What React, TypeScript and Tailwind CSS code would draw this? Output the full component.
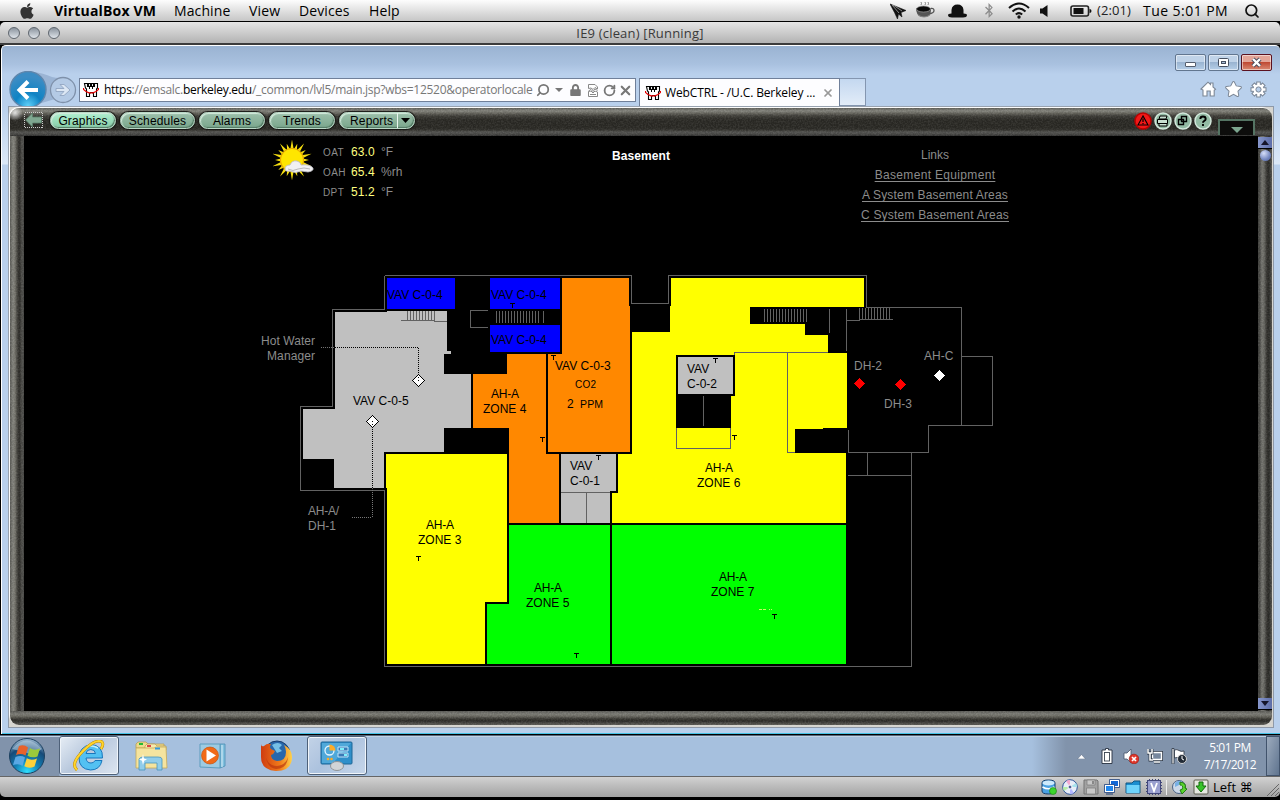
import React from "react";
import { FaApple, FaBluetoothB, FaLock, FaStar } from "react-icons/fa";
import { Search, RotateCw, X } from "lucide-react";

const range = (from: number, to: number, step: number) => {
  const out: number[] = [];
  for (let v = from; v <= to; v += step) out.push(v);
  return out;
};

/* ---------- host menu bar ---------- */

function MacMenuBar() {
  return (
    <header className="flex h-[22px] shrink-0 items-center border-b border-black bg-linear-to-b from-[#fdfdfd] to-[#c6c6c6] pl-[18px] font-['Open_Sans','Noto_Sans',sans-serif] text-[14px] leading-none text-black">
      <FaApple className="h-[18px] w-[18px] text-[#333]" />
      <nav className="flex pl-[18px]">
        <span className="w-[120px] font-bold tracking-[0.18px] whitespace-nowrap">VirtualBox VM</span>
        <span className="w-[75px] tracking-[0.1px]">Machine</span>
        <span className="w-[50px] tracking-[0.2px]">View</span>
        <span className="w-[70px] tracking-[0.1px]">Devices</span>
        <span className="tracking-[0.1px]">Help</span>
      </nav>
      <div className="ml-auto flex items-center pr-[20px]">
        <svg className="mr-[10px]" width="16" height="16" viewBox="0 0 16 16">
          <path d="M0 1 16 7.500 11 9.500 12 14 8.500 11 7.500 16 4.500 9.500Z" fill="#111" stroke="#111" strokeWidth=".6" />
          <path d="M2 2 9 10M3 2l9 6" stroke="#bbb" strokeWidth=".7" fill="none" />
        </svg>
        <svg className="mr-[13px]" width="19" height="17" viewBox="0 0 19 17">
          <path d="M5 3q1-1.500 0-3M9 3q1-1.500 0-3M12 3q1-1.500 0-3" stroke="#777" fill="none" strokeWidth=".9" />
          <path d="M0 6h15v2q0 6-5 7H5Q0 13 0 6Z" fill="#555" />
          <ellipse cx="7.500" cy="7" rx="7" ry="3" fill="#0a0a0a" stroke="#999" strokeWidth=".7" />
          <path d="M15 6.500q3-.5 3 2t-5 3.500" stroke="#555" strokeWidth="1.300" fill="none" />
          <path d="M2 13q6 4 12 0" stroke="#888" fill="none" />
        </svg>
        <svg className="mr-[17px]" width="19" height="14" viewBox="0 0 19 14">
          <path d="M3.500 9.500V6Q4 .500 9.500.500T15.500 6v3.500q3.500.2 3.500 1.500 0 2.500-4 2.500H4Q0 13.500 0 11q0-1.300 3.500-1.500Z" fill="#111" />
        </svg>
        <FaBluetoothB className="mr-[14px] h-[15px] w-[10px] text-[#8d8d8d]" />
        <svg className="mr-[10px]" width="22" height="17" viewBox="0 0 22 17">
          <g fill="none" stroke="#111" strokeWidth="2">
            <path d="M1 6q10-9 20 0" />
            <path d="M4.500 9.500q6.500-6 13 0" />
            <path d="M7.800 12.500q3.200-2.800 6.400 0" />
          </g>
          <circle cx="11" cy="15" r="1.700" fill="#111" />
        </svg>
        <svg className="mr-[22px]" width="8" height="12" viewBox="0 0 8 12">
          <path d="M0 3.500h2.500L7.500 0v12L2.500 8.500H0Z" fill="#111" />
        </svg>
        <svg className="mr-[5px]" width="22" height="12" viewBox="0 0 22 12">
          <rect x="1" y="1" width="17.500" height="10" rx="2" fill="none" stroke="#222" strokeWidth="1.600" />
          <rect x="3.500" y="3" width="10" height="6" fill="#111" />
          <path d="M19.500 4q2 0 2 2t-2 2Z" fill="#111" />
        </svg>
        <span className="w-[46px] text-[13px] tracking-[0.1px] text-[#222]">(2:01)</span>
        <span className="w-[101px] tracking-[0.45px] whitespace-nowrap">Tue 5:01 PM</span>
        <Search className="h-4 w-4 text-[#111]" strokeWidth={2.6} />
      </div>
    </header>
  );
}

function VmTitleBar() {
  return (
    <div className="flex h-[23px] shrink-0 items-center rounded-t-[5px] border-b-2 border-[#3c3c3c] bg-linear-to-b from-[#e6e6e6] to-[#b3b3b3]">
      <div className="flex w-[60px] gap-2 pl-2">
        {[0, 1, 2].map((i) => (
          <span key={i} className="h-3 w-3 rounded-full border border-[#5f666e] bg-linear-to-b from-[#8b949e] to-[#dfe4ea]" />
        ))}
      </div>
      <div className="flex-1 pt-[2px] pr-[60px] text-center font-['Open_Sans','Noto_Sans',sans-serif] text-[13px] leading-none tracking-[0.18px] text-[#3a3a3a]">
        IE9 (clean) [Running]
      </div>
    </div>
  );
}

/* ---------- browser chrome ---------- */

function WebCtrlIcon() {
  return (
    <svg className="shrink-0" width="16" height="16" viewBox="0 0 16 16">
      <path
        d="M1.500 1.500h3v3h1v-3h2v3h1v-3h2v3h1v-3h3V6l-1 1v7.500h-3v-3l-1-1h-2l-1 1v3h-3V7l-1-1Z"
        fill="#fff"
        stroke="#000"
        strokeWidth="1.100"
      />
      <path d="M6.500 4v3M9.500 4v3" stroke="#000" />
      <path d="M.5 6v1.500L3 9.500l3 1.300h4l3-1.300 2.500-2V6" stroke="#e80000" strokeWidth="1.200" fill="none" />
    </svg>
  );
}

function CaptionButtons() {
  const base = "flex h-[17px] w-[31px] items-center justify-center rounded-[2px] border shadow-[inset_0_0_0_1px_rgba(255,255,255,0.5)]";
  return (
    <div className="flex gap-[2px]">
      <span className={`${base} border-[#62768f] bg-[linear-gradient(#c0d3e8_45%,#9ab4d1_50%,#b6cfe8)]`}>
        <span className="mt-1 h-[5px] w-[11px] rounded-[1px] border border-[#555e6d] bg-white" />
      </span>
      <span className={`${base} border-[#62768f] bg-[linear-gradient(#c0d3e8_45%,#9ab4d1_50%,#b6cfe8)]`}>
        <svg width="11" height="9" viewBox="0 0 11 9">
          <rect x=".5" y=".5" width="10" height="8" rx="1" fill="#fff" stroke="#454f60" />
          <rect x="3.500" y="3.500" width="4" height="2" fill="#a9c0da" stroke="#454f60" />
        </svg>
      </span>
      <span className={`${base} border-[#5b1220] bg-[linear-gradient(#e3a598_45%,#c04a34_50%,#d98a74)]`}>
        <svg width="13" height="11" viewBox="0 0 13 11">
          <path d="m3 2 7 7M10 2 3 9" stroke="#454a5c" strokeWidth="4.200" />
          <path d="m3 2 7 7M10 2 3 9" stroke="#fff" strokeWidth="2.400" />
        </svg>
      </span>
    </div>
  );
}

function NavButtons() {
  return (
    <svg className="shrink-0" width="71" height="35" viewBox="0 0 71 35">
      <defs>
        <radialGradient id="back" cx=".5" cy=".95" r=".8">
          <stop offset="0" stopColor="#5fd0f8" />
          <stop offset=".45" stopColor="#0f83c4" />
          <stop offset="1" stopColor="#3b8cc4" />
        </radialGradient>
      </defs>
      <path d="M20 0Q36 2 44 6q8 2 12 0l-9 22-20 6Z" fill="#8fa8cb" opacity=".7" />
      <circle cx="55" cy="19" r="12.500" fill="#b4cae5" stroke="#7f91aa" strokeWidth="1.300" />
      <path d="M48 17.500h8l-4-4h4l6 5.500-6 5.500h-4l4-4h-8Z" fill="#dce7f4" stroke="#8ba0bd" strokeWidth=".8" />
      <circle cx="20" cy="18.500" r="18" fill="url(#back)" stroke="#5f86ac" strokeWidth="1.400" />
      <path d="M30 19H13M20 10.500 11.500 19l8.500 8.500" stroke="#fff" strokeWidth="4" fill="none" />
    </svg>
  );
}

function BrowserChrome() {
  return (
    <>
      <div className="flex h-[25px] shrink-0 justify-end pt-[8px] pr-[8px]">
        <CaptionButtons />
      </div>
      <div className="flex h-[35px] shrink-0 overflow-hidden pl-[6px] font-['Open_Sans','Noto_Sans',sans-serif] text-[12px]">
        <NavButtons />
        <div className="mt-[7px] flex h-[24px] w-[557px] shrink-0 items-center border border-[#70809a] bg-[#fdfdff] pl-[3px] text-[#777]">
          <WebCtrlIcon />
          <span className="w-[437px] pl-[5px] tracking-[-0.28px] whitespace-nowrap">
            <span className="text-black">https</span>://emsalc.<span className="text-black">berkeley.edu</span>
            /_common/lvl5/main.jsp?wbs=12520&amp;operatorlocale
          </span>
          <Search className="h-[14px] w-[14px] shrink-0 -scale-x-100 text-[#777]" strokeWidth={3} />
          <svg className="mr-[7px] ml-[5px] shrink-0" width="8" height="4" viewBox="0 0 8 4">
            <path d="M0 0h8L4 4Z" fill="#777" />
          </svg>
          <FaLock className="mr-[7px] h-[12px] w-[11px] shrink-0" />
          <svg className="mr-[5px] shrink-0" width="10" height="13" viewBox="0 0 10 13" fill="#fff" stroke="#888">
            <path d="M.5 4.500v-4H7L9.500 3v2L7 3.500 5 5.500 3 4ZM.5 12.500v-5L3 7l2 2 2-2 2.500 1v4.500Z" />
            <path d="M2 10.500h6M.5 7 3 5.500 5 7.500 7 5l2.500 1.500" />
          </svg>
          <RotateCw className="mr-[2px] h-[13px] w-[13px] shrink-0" strokeWidth={3.4} />
          <X className="h-[15px] w-[15px] shrink-0" strokeWidth={3.4} />
        </div>
        <div className="mt-[7px] ml-[3px] flex h-[28px] w-[201px] shrink-0 items-center border border-b-0 border-[#70809a] bg-[#fdfdff] pl-[5px] text-black">
          <WebCtrlIcon />
          <span className="w-[161px] pl-[4px] tracking-[-0.13px] whitespace-nowrap">WebCTRL - /U.C. Berkeley ...</span>
          <X className="h-[12px] w-[12px] text-[#999]" strokeWidth={3.4} />
        </div>
        <div className="mt-[7px] h-[28px] w-[26px] shrink-0 border border-l-0 border-[#8496b0] bg-linear-to-b from-[#c4d8f0] to-[#e2ecf8]" />
        <div className="mt-[10px] ml-auto flex gap-[8px] pr-[13px]">
          <svg width="17" height="16" viewBox="0 0 17 16">
            <path d="M1 8 8 1.200l2.500 2.300V2h2.500v4l2.500 2.200-1.300 1V15h-4v-5H7v5H3V9Z" fill="#fff" stroke="#7c8796" strokeWidth="1.100" />
          </svg>
          <FaStar className="h-[16px] w-[17px] overflow-visible fill-white stroke-[#7c8796] [stroke-width:34px]" />
          <svg width="17" height="17" viewBox="-8.5 -8.500 17 17">
            <g stroke="#7c8796" strokeWidth="4.600">
              {[0, 45, 90, 135].map((a) => (
                <path key={a} d="M0-8V8" transform={`rotate(${a})`} />
              ))}
            </g>
            <circle r="6" fill="#7c8796" />
            <g stroke="#fff" strokeWidth="2.600">
              {[0, 45, 90, 135].map((a) => (
                <path key={a} d="M0-7V7" transform={`rotate(${a})`} />
              ))}
            </g>
            <circle r="5" fill="#fff" />
            <circle r="2.600" fill="#b8cfea" stroke="#7c8796" />
          </svg>
        </div>
      </div>
    </>
  );
}

/* ---------- application frame ---------- */

function Grain() {
  return (
    <svg className="pointer-events-none absolute inset-0 h-full w-full opacity-6">
      <filter id="grain" x="0" y="0" width="100%" height="100%" colorInterpolationFilters="sRGB">
        <feTurbulence type="fractalNoise" baseFrequency=".6" numOctaves="2" />
        <feColorMatrix values="3 0 0 0 -1.1  3 0 0 0 -1.1  3 0 0 0 -1.15  0 0 0 0 1" />
      </filter>
      <rect width="100%" height="100%" filter="url(#grain)" />
    </svg>
  );
}

const pill =
  "flex h-[17px] items-center justify-center rounded-full border border-[#b9d8c6] bg-linear-to-b shadow-[inset_1px_1px_1px_#d5eadd,inset_-1px_-1px_1px_#547a64,0_0_1px_1px_#161613]";
const pillIdle = "from-[#9cc0ab] to-[#7aa68c]";

function RoundButton({ red, children }: { red?: boolean; children: React.ReactNode }) {
  return (
    <svg width="18" height="18" viewBox="0 0 18 18">
      <circle cx="9" cy="9" r="8" fill={red ? "#f01818" : "#93bba4"} stroke={red ? "#b00" : "#d3e8dc"} strokeWidth="1.500" />
      {children}
    </svg>
  );
}

function AppToolbar() {
  return (
    <div className="relative flex h-[28px] shrink-0 bg-[linear-gradient(#62625d,#86867f_3px,#6a6962_5px,#3f3e39_8px,#2b2a26_12px,#2a2925_20px,#34332f_22px,#545452_24px,#4a4a48_26px,#303030)] pt-[4px] pl-[14px] font-['Liberation_Sans',Arial,sans-serif] text-[12px] leading-none text-black">
      <Grain />
      <svg className="relative mr-[6px]" width="20" height="17" viewBox="0 0 20 17">
        <rect x=".5" y=".5" width="18" height="15" fill="none" stroke="#ccc" strokeDasharray="1 1" shapeRendering="crispEdges" />
        <path d="M1.500 8 8.500 1v4h9v6h-9v4Z" fill="#7fa790" stroke="#5b7e69" strokeWidth=".8" />
      </svg>
      <div className="relative flex gap-[4px] tracking-[0.15px]">
        <span className={`${pill} w-[66px] from-[#b0f0d0] to-[#86cba6]`}>Graphics</span>
        <span className={`${pill} ${pillIdle} w-[75px]`}>Schedules</span>
        <span className={`${pill} ${pillIdle} w-[66px]`}>Alarms</span>
        <span className={`${pill} ${pillIdle} w-[66px]`}>Trends</span>
        <span className={`${pill} ${pillIdle} w-[76px] pl-[10px]`}>
          Reports
          <span className="ml-[4px] h-[15px] border-l border-[#e8f5ee]" />
          <svg className="mr-auto ml-[3px]" width="9" height="5" viewBox="0 0 9 5">
            <path d="M0 0h9L4.500 5Z" />
          </svg>
        </span>
      </div>
      <div className="relative ml-auto flex gap-[2px] pr-[6px]">
        <RoundButton red>
          <path d="M9 4 4 13h10Z" fill="none" stroke="#000" strokeWidth="1.100" />
          <path d="M9 6.500v3.500M9 11v1.300" stroke="#000" strokeWidth="1.200" />
        </RoundButton>
        <RoundButton>
          <path d="M6 4h7l-1 3H5ZM3.500 7.500h10v4h-10ZM5 11.500h8v2.500H5Z" fill="#c8dfd1" stroke="#000" />
        </RoundButton>
        <RoundButton>
          <path d="M7.500 4.500h5v5h-5ZM4.500 7.500h5v5h-5Z" fill="#93bba4" stroke="#000" strokeWidth="1.400" />
        </RoundButton>
        <RoundButton>
          <path d="M6.300 7q0-2.500 2.700-2.500T11.700 7q0 1.200-1.400 1.800T9 10.700M9 12v2" fill="none" stroke="#000" strokeWidth="1.900" />
        </RoundButton>
      </div>
      <div className="relative mt-[7px] mr-[17px] flex h-[16px] w-[37px] justify-center border-2 border-b-0 border-[#547463] bg-[#0d0d0c] pt-[6px]">
        <svg width="12" height="6" viewBox="0 0 12 6">
          <path d="M0 0h12L6 6Z" fill="#7ca68f" />
        </svg>
      </div>
    </div>
  );
}

function ScrollArrow({ down }: { down?: boolean }) {
  return (
    <span className="relative flex h-[12px] w-full items-center justify-center border-b border-black bg-linear-to-r from-[#8797cc] to-[#5e6ea8]">
      <svg width="8" height="5" viewBox="0 0 8 5">
        <path d={down ? "M0 0h8L4 5Z" : "M0 5h8L4 0Z"} fill="#15152a" />
      </svg>
    </span>
  );
}

function Scrollbar() {
  return (
    <div className="relative flex w-[14px] shrink-0 flex-col items-center bg-[linear-gradient(to_right,#3e3e3b,#4e4e4b_2px,#777772_4px,#6a6a65_6px,#33322f_9px,#2a2a27_11px,#5a5a57)] pt-px">
      <Grain />
      <ScrollArrow />
      <span className="relative mt-px h-[11px] w-[11px] rounded-full bg-[radial-gradient(circle_at_35%_30%,#d5def8,#7487c0_60%,#4b5b95)]" />
      <span className="mt-auto mb-px flex w-full">
        <ScrollArrow down />
      </span>
    </div>
  );
}

/* ---------- weather, title, links ---------- */

function SunIcon() {
  return (
    <svg width="42" height="42" viewBox="-19 -20 42 42">
      <g fill="#f6df10">
        {range(0, 345, 18).map((a, i) => (
          <path key={a} d={i % 2 ? "M-1.800-10 0-17 1.800-10Z" : "M-1.800-10 0-20.500 1.800-10Z"} transform={`rotate(${a})`} />
        ))}
      </g>
      <circle r="11.500" fill="#ffe600" stroke="#e9a800" strokeWidth="1.200" />
      <path d="M-7 9q0-4 5-4 2-5 7-4 4 1 4 4 9-1 12 3 1 3-5 4l-7-1q-6 3-11 0-5 1-5-2Z" fill="#f1f1f3" stroke="#b9b9c0" strokeWidth=".8" />
      <path d="M-4 9q5 3 10 0 6-2 12 0" stroke="#aaa" strokeWidth=".8" fill="none" />
    </svg>
  );
}

const readings = [
  ["OAT", "63.0", "°F"],
  ["OAH", "65.4", "%rh"],
  ["DPT", "51.2", "°F"],
];

function PageHeader() {
  return (
    <div className="flex h-[90px] shrink-0 pl-[249px] text-[12px]">
      <div className="w-[50px] pt-[4px]">
        <SunIcon />
      </div>
      <div className="w-[225px] pt-[6px]">
        {readings.map(([name, value, unit]) => (
          <div key={name} className="flex h-5 items-center text-[#8c8c8c]">
            <span className="w-[28px] text-[10px] tracking-[0.4px]">{name}</span>
            <span className="w-[30px] tracking-[0.1px] text-[#ffff80]">{value}</span>
            <span>{unit}</span>
          </div>
        ))}
      </div>
      <div className="w-[186px] pt-[12px] text-center leading-4 font-bold tracking-[0.1px] text-white">Basement</div>
      <div className="ml-[100px] w-[202px] pt-[9px] text-center leading-5 text-[#8c8c8c]">
        <div>Links</div>
        <div className="tracking-[0.33px] underline underline-offset-2">Basement Equipment</div>
        <div className="tracking-[0.17px] underline underline-offset-2">A System Basement Areas</div>
        <div className="tracking-[0.2px] underline underline-offset-2">C System Basement Areas</div>
      </div>
    </div>
  );
}

/* ---------- floor plan ---------- */

const rooms: [string, string][] = [
  ["#c0c0c0", "335,312 387,312 387,311 447,311 447,351 451,351 451,354 444,354 444,374 471,374 471,428 444,428 444,452 384,452 384,488 334,488 334,459 303,459 303,409 335,409"],
  ["#00f", "387,278 455,278 455,309 387,309"],
  ["#00f", "490,278 560,278 560,309 490,309"],
  ["#00f", "490,325 560,325 560,352 490,352"],
  ["#ff8800", "473,374 507,374 507,354 546,354 546,454 559,454 559,523 509,523 509,428 473,428"],
  ["#ff8800", "548,354 562,354 562,278 629,278 629,306 630,306 630,452 548,452"],
  ["#c0c0c0", "561,454 616,454 616,491 610,491 610,523 561,523"],
  ["#ff0", "386,454 507,454 507,602 485,602 485,664 387,664 387,488 386,488"],
  ["#0f0", "509,525 610,525 610,664 487,664 487,604 509,604"],
  ["#0f0", "612,525 846,525 846,664 612,664"],
  ["#ff0", "612,493 618,493 618,454 632,454 632,332 670,332 670,306 671,306 671,278 864,278 864,307 750,307 750,324 805,324 805,335 828,335 828,353 847,353 847,428 823,428 823,429 795,429 795,453 846,453 846,523 612,523"],
  ["#000", "676,355 735,355 735,396 731,396 731,428 676,428"],
  ["#c0c0c0", "678,357 733,357 733,394 678,394"],
];

const walls = [
  "M384.500 275.500V309.500H332.500V406.500H300.500V490.500H384.500V666.500H911.500V452.500",
  "M384.500 275.500H631.500V303.500H668.500V275.500H866.500V307.500H961.500V425.500",
  "M961.500 356.500H992.500V425.500H928.500V452.500H848.500V430",
  "M867.500 453V475M848 475.500H911",
  "M561 492.500H610M586.500 493V523",
  "M703.500 396V426M676.500 428V448.500H730.500V428",
  "M734.500 355V352.500H828M787.500 353V452.500H795",
  "M829.500 309V333M846.500 309V351M846 320.500H860M859 319.500H893",
  "M401 320.500H434.500M434 321.500H447",
  "M488 310.500H470.500V327.500H488",
  "M543.500 311V323",
];

const labels: [number, number, string, number?][] = [
  [387, 299, "VAV C-0-4"], [491, 299, "VAV C-0-4"], [491, 344, "VAV C-0-4"],
  [353, 405, "VAV C-0-5"], [491, 398, "AH-A", 28], [483, 413, "ZONE 4"],
  [555, 370, "VAV C-0-3"], [567, 408, "2"], [687, 373, "VAV"], [687, 388, "C-0-2"],
  [426, 529, "AH-A", 28], [418, 544, "ZONE 3"], [570, 470, "VAV"], [570, 485, "C-0-1"],
  [534, 592, "AH-A", 28], [526, 607, "ZONE 5"], [705, 472, "AH-A", 28], [697, 487, "ZONE 6"],
  [719, 581, "AH-A", 28], [711, 596, "ZONE 7"],
];

const outerLabels: [number, number, string, number?][] = [
  [261, 345, "Hot Water", 54], [267, 360, "Manager", 48], [308, 515, "AH-A/", 31], [308, 530, "DH-1"],
  [854, 370, "DH-2"], [884, 408, "DH-3"], [924, 360, "AH-C"],
];

const sensors = [
  [416, 556], [574, 653], [772, 614], [540, 437], [510, 303], [551, 355], [713, 358], [596, 455], [732, 435],
];

function FloorPlan() {
  return (
    <svg className="block shrink-0" width="1234" height="485" viewBox="24 226 1234 485" shapeRendering="crispEdges">
      {rooms.map(([fill, points], i) => (
        <polygon key={i} fill={fill} points={points} />
      ))}
      <g fill="none" stroke="#626262">
        {walls.map((d) => (
          <path key={d} d={d} />
        ))}
        {range(407.5, 434.5, 3).map((x) => <path key={x} d={`M${x} 311V320`} />)}
        {range(496.5, 538.5, 3).map((x) => <path key={x} d={`M${x} 311V323`} />)}
        {range(764.5, 806.5, 3).map((x) => <path key={x} d={`M${x} 309V322`} />)}
        {range(859.5, 889.5, 3).map((x) => <path key={x} d={`M${x} 308V319`} />)}
      </g>
      <g stroke="#000" strokeDasharray="1 1" fill="none">
        <path d="M321 347.500H335M372.500 488V517.500M352 517.500H372" stroke="#777" />
        <path d="M335 347.500H418.500V375M372.500 427V488" />
      </g>
      <g fill="#fff" stroke="#000">
        <path d="M418.500 374.500l6 6-6 6-6-6Z" />
        <path d="M372.500 415.500l6 6-6 6-6-6Z" />
      </g>
      <path d="M418 377h1v1h-1ZM418 380h1v1h-1ZM372 421h1v1h-1ZM372 424h1v1h-1Z" />
      <path d="M859.500 378l5.500 5.500-5.500 5.500-5.500-5.500ZM900.500 379l5.500 5.500-5.500 5.500-5.500-5.500Z" fill="#f00" />
      <path d="M939.500 370l5.500 5.500-5.500 5.500-5.500-5.500Z" fill="#fff" />
      {sensors.map(([x, y]) => (
        <path key={`${x}-${y}`} d={`M${x} ${y}h5v1h-2v4h-1v-4h-2Z`} />
      ))}
      <path d="M759 609h3v1h-3ZM763 609h3v1h-3ZM769 609h1v1h-1ZM771 609h1v1h-1Z" fill="#c8ff60" />
      <g fontSize="12">
        {labels.map(([x, y, text, width]) => (
          <text key={`${x}-${y}`} x={x} y={y} textLength={width}>{text}</text>
        ))}
        <text x="575" y="388" fontSize="10" textLength="21">CO2</text>
        <text x="580" y="408" fontSize="10.500" textLength="23">PPM</text>
        <g fill="#8c8c8c">
          {outerLabels.map(([x, y, text, width]) => (
            <text key={`${x}-${y}`} x={x} y={y} textLength={width}>{text}</text>
          ))}
        </g>
      </g>
    </svg>
  );
}

function AppFrame() {
  return (
    <div className="mr-[6px] ml-[6px] flex h-[622px] shrink-0 flex-col border border-[#8e99a8] bg-[#d6d5d0] p-px pb-[2px]">
      <div className="relative flex flex-1 flex-col overflow-hidden rounded-[9px] shadow-[-1px_-1px_1px_#fff]">
        <AppToolbar />
        <div className="flex flex-1">
          <div className="relative w-[14px] shrink-0 bg-[linear-gradient(to_right,#5c5c58,#85857f_3px,#77766f_5px,#4a4944_7px,#2e2d2a_9px,#33322f_10px,#52524f_12px,#454543)]">
            <Grain />
          </div>
          <main className="flex w-[1234px] shrink-0 flex-col bg-black font-['Liberation_Sans',Arial,sans-serif]">
            <PageHeader />
            <FloorPlan />
          </main>
          <Scrollbar />
        </div>
        <div className="relative h-[14px] shrink-0 bg-[linear-gradient(#5b5b58,#7d7d77_3px,#6f6e67_5px,#3a3934_8px,#2d2c29_10px,#4a4945_12px,#5f5e58)]">
          <Grain />
        </div>
        <div className="pointer-events-none absolute top-0 left-0 h-[14px] w-[14px] bg-[radial-gradient(circle_at_5px_5px,rgba(255,255,255,0.8),transparent_8px)]" />
      </div>
    </div>
  );
}

function BrowserWindow() {
  return (
    <section className="ml-px flex h-[689px] shrink-0 flex-col overflow-hidden rounded-t-[5px] border-t border-l border-white bg-[linear-gradient(#9ab3d2,#a9c1df_18px,#b9d0ec_28px,#b9d0ec_60px,#dbe8f7_118px,#b9d0ec_119px,#b9d0ec)] shadow-[inset_0_-1px_0_#45c2e6]">
      <BrowserChrome />
      <AppFrame />
    </section>
  );
}

/* ---------- guest taskbar ---------- */

function StartOrb() {
  return (
    <svg width="38" height="38" viewBox="-19 -19 38 38">
      <defs>
        <radialGradient id="orb" cx=".5" cy=".95" r=".9">
          <stop offset="0" stopColor="#2fe0ff" />
          <stop offset=".4" stopColor="#127eb4" />
          <stop offset=".75" stopColor="#164a78" />
          <stop offset="1" stopColor="#8aa9c4" />
        </radialGradient>
      </defs>
      <circle r="17.500" fill="url(#orb)" stroke="#1d4160" />
      <path d="M-15-7Q0-24 15-7 6-1 0-3t-15-4Z" fill="#c6d9e8" opacity=".5" />
      <path d="M-8-10Q-3-12 1-8.500L-1.500-.5Q-6-3-11-1Z" fill="#e8622b" />
      <path d="M3-8Q7-5 13-7.500L10.500.500Q5 2.500.500-.2Z" fill="#9bc93c" />
      <path d="M-11.500 1Q-6-1-2 1.500L-4.500 10Q-8 7-14 9Z" fill="#5aa8e4" />
      <path d="M-.2 2.200Q4 5 10 2.500L7.500 10.500Q2 13-2.700 10.300Z" fill="#fcd13b" />
    </svg>
  );
}

function IeIcon() {
  return (
    <svg width="32" height="32" viewBox="0 0 32 32">
      <path d="M29.500 18H13q.5 5 5 5 3 0 4-2.500h7Q27 30 17.500 30 6 29 6 18T17.500 4.500Q30 5 29.500 18ZM13 13.500h9.500Q22 9.500 17.800 9.500T13 13.500Z" fill="#53c1f2" stroke="#1877bd" />
      <path d="M9 11Q16 3 25 8" stroke="#c2effd" strokeWidth="1.500" fill="none" />
      <path d="M4 30Q-3 24 10 11T29 2q2 2-1 7" stroke="#c28a00" strokeWidth="3" fill="none" />
      <path d="M4 30Q-3 24 10 11T29 2q2 2-1 7" stroke="#ffd52d" strokeWidth="2" fill="none" />
    </svg>
  );
}

function ExplorerIcon() {
  return (
    <svg width="33" height="30" viewBox="0 0 33 30">
      <path d="M1 3 3 1h8l2 2h16v4H1Z" fill="#eeda8d" stroke="#b69a4b" strokeWidth=".7" />
      <path d="M4 2h4v2H4Z" fill="#2b3" />
      <path d="M10 5 12 3h8l2 2h9v4H10Z" fill="#f7eab0" stroke="#b69a4b" strokeWidth=".7" />
      <path d="M12 4h4v2h-4Z" fill="#d44" />
      <path d="M1 7h18l2-1h10l1 21H1Z" fill="#f5e49f" stroke="#c5a958" strokeWidth=".8" />
      <path d="M20 6.500h5v2h-5Z" fill="#39d" />
      <path d="M4 29V18q1-2 4-2h15q4 0 4 2v11h-5v-7H10v7Z" fill="#91cdea" stroke="#4795bd" strokeWidth=".8" />
      <path d="m8 13 1 4.500L12 18.500 9.200 19.700 8 24l-1-4.200L4 18.500l3-1Z" fill="#fff" />
    </svg>
  );
}

function MediaIcon() {
  return (
    <svg width="30" height="27" viewBox="0 0 30 27">
      <path d="M21 1h5v22l-5 2Z" fill="#82c0de" stroke="#4a8eb3" strokeWidth=".8" />
      <path d="M1 1h20v24L1 24Z" fill="#9dcbe3" stroke="#5d9dbf" />
      <path d="M23 2v22" stroke="#d8edf7" />
      <circle cx="11" cy="12.500" r="8.500" fill="#f16a17" stroke="#c24d08" strokeWidth=".6" />
      <path d="M7.500 6.500 17 12.500 7.500 18.500Z" fill="#fff" />
    </svg>
  );
}

function FirefoxIcon() {
  return (
    <svg width="32" height="32" viewBox="0 0 32 32">
      <defs>
        <linearGradient id="fox" x1="0" x2="1">
          <stop offset="0" stopColor="#cf3c10" />
          <stop offset=".6" stopColor="#f07a1a" />
          <stop offset="1" stopColor="#ffd24a" />
        </linearGradient>
      </defs>
      <circle cx="17" cy="14" r="13" fill="#2867ab" stroke="#173b6c" />
      <path d="M12 5q6-4 10 0l-3 3 3 3-5 2Z" fill="#75bfe6" />
      <path d="M1 4q0 3 3 2 3-3 7-2-2 3 0 5l4 2q-1 3-4 4 0 5 6 6 9 0 9-9 0-4-2-7 8 4 8 12 0 14-16 14Q1 30 1 17q0-7 0-13Z" fill="url(#fox)" />
      <path d="M6 18q3 8 11 8 9-1 11-9-1 12-12 12Q8 28 6 18Z" fill="#b8320c" opacity=".65" />
    </svg>
  );
}

function PanelIcon() {
  return (
    <svg width="34" height="30" viewBox="0 0 34 30">
      <rect x="1" y="1" width="31" height="22" rx="1" fill="#2f8fca" stroke="#1e6797" />
      <path d="M2 2h29L13 22H2Z" fill="#68b9e3" opacity=".6" />
      <circle cx="9.500" cy="9.500" r="4.500" fill="none" stroke="#e5f5ff" strokeWidth="1.300" />
      <path d="M9.500 9.500V3.500a6 6 0 0 1 6 6Z" fill="#fcab28" />
      <path d="M18 6h10v4H18ZM18 12h10v4H18Z" fill="#3a79b5" stroke="#bfe5fa" />
      <path d="M20 8h4M24 14h3" stroke="#7cf0fc" strokeWidth="2" />
      <circle cx="8" cy="18" r="1.300" fill="#fcab28" />
      <circle cx="11.500" cy="18" r="1.300" fill="#fcab28" />
      <ellipse cx="17" cy="25" rx="6.500" ry="4.500" fill="#d1d4d7" stroke="#8f9396" />
    </svg>
  );
}

function Taskbar() {
  const active =
    "flex h-[39px] items-center justify-center rounded-[3px] border border-[#4e6179] shadow-[inset_0_0_0_1px_#f0f5fa]";
  return (
    <div className="flex h-[41px] shrink-0 border-t border-[#55667c] bg-[linear-gradient(to_right,#8193ab_59px,#a6c0de_60px,#a6c0de_1032px,#8193ab_1066px)] shadow-[inset_0_1px_0_#c3d3e5]">
      <div className="flex w-[59px] items-center pl-[8px]">
        <StartOrb />
      </div>
      <div className={`${active} w-[60px] bg-[linear-gradient(135deg,#e6edf5,#b8c8dd_45%,#dce5f0)]`}><IeIcon /></div>
      <div className="flex w-[64px] items-center justify-center"><ExplorerIcon /></div>
      <div className="flex w-[62px] items-center justify-center"><MediaIcon /></div>
      <div className="flex w-[62px] items-center justify-center"><FirefoxIcon /></div>
      <div className={`${active} w-[60px] bg-[linear-gradient(135deg,#c3d3e7,#acc2de_45%,#c6d6ea)]`}><PanelIcon /></div>
      <div className="ml-auto flex items-center">
        <svg className="mr-[15px]" width="9" height="5" viewBox="0 0 9 5">
          <path d="M.5 5 4.500.500 8.500 5Z" fill="#fff" stroke="#55657c" strokeWidth=".5" />
        </svg>
        <svg className="mr-[10px]" width="12" height="16" viewBox="0 0 12 16">
          <path d="M4.500 2V.500h3V2h3.500v13.500H1V2Z" fill="#fff" stroke="#26303e" strokeWidth=".9" />
          <rect x="3.500" y="4.500" width="5" height="8.500" fill="#fff" stroke="#39434f" strokeWidth=".9" />
        </svg>
        <svg className="mr-[8px]" width="16" height="16" viewBox="0 0 16 16">
          <path d="M1 5h3l4-4v14l-4-4H1Z" fill="#fff" stroke="#46546a" strokeWidth=".8" />
          <circle cx="11" cy="11" r="4.800" fill="#e0382c" stroke="#a01e14" strokeWidth=".7" />
          <path d="m9 9 4 4M13 9l-4 4" stroke="#fff" strokeWidth="1.700" />
        </svg>
        <svg className="mr-[8px]" width="16" height="16" viewBox="0 0 16 16">
          <path d="M5.500 4.500h9v7h-9ZM7 14h6" fill="#5f7085" stroke="#26303e" strokeWidth="2.800" />
          <path d="M5.500 4.500h9v7h-9ZM7 14h6" fill="#77889e" stroke="#fff" strokeWidth="1.400" />
          <path d="M1 1v4h4V1M3 5v7h3" stroke="#26303e" strokeWidth="2.800" fill="none" />
          <path d="M1 1v4h4V1M3 5v7h3" stroke="#fff" strokeWidth="1.500" fill="none" />
        </svg>
        <svg className="mr-[11px]" width="16" height="16" viewBox="0 0 16 16">
          <path d="M1 .5h2V16H1Z" fill="#fff" stroke="#26303e" strokeWidth=".8" />
          <path d="M3.500 2Q6 1 8 2.500T13 3v7q-3 1-5 0t-4.500 0Z" fill="#fff" stroke="#26303e" strokeWidth=".8" />
          <circle cx="11" cy="11" r="4.500" fill="#222b36" stroke="#ddd" strokeWidth=".9" />
          <path d="M11 8v3l2 1" stroke="#fff" fill="none" />
        </svg>
        <div className="mr-[4px] w-[64px] text-center font-['Open_Sans','Noto_Sans',sans-serif] text-[12px] leading-[17px] tracking-[-0.5px] whitespace-nowrap text-white">
          <div>5:01 PM</div>
          <div>7/17/2012</div>
        </div>
      </div>
      <div className="h-[40px] w-[14px] border border-[#41536c] bg-linear-to-br from-[#9dabbd] to-[#5f748f]" />
    </div>
  );
}

function VmStatusBar() {
  return (
    <footer className="flex h-[21px] shrink-0 items-center justify-end rounded-b-[5px] border-t border-[#666] bg-linear-to-b from-[#d2d2d2] to-[#a2a2a2] font-['Open_Sans','Noto_Sans',sans-serif] text-[13px] leading-none text-black">
      <div className="flex items-center gap-[5px]">
        <svg width="16" height="16" viewBox="0 0 16 16">
          <path d="M1 4q0-3 6.500-3T14 4v8q0 3-6.500 3T1 12Z" fill="#49a0e2" stroke="#173d69" />
          <ellipse cx="7.500" cy="4" rx="6" ry="2.500" fill="#cdeafc" />
          <path d="M1.500 8q6 3.500 12 0" stroke="#fff" strokeWidth="1.500" fill="none" />
          <circle cx="12" cy="12" r="3.500" fill="#3bd52d" stroke="#157c0e" strokeWidth=".6" />
        </svg>
        <svg width="16" height="16" viewBox="0 0 16 16">
          <circle cx="8" cy="8" r="7.300" fill="#e7edf8" stroke="#31579d" />
          <path d="M8 8 4 2q2-1 4-1Z" fill="#f2a9d0" />
          <path d="m8 8 6-4q1 2 1 4Z" fill="#a8e3ec" />
          <path d="m8 8 4 6q-2 1-4 1Z" fill="#b2b6ff" />
          <path d="M8 8 2 12Q1 10 1 8Z" fill="#b5eda7" />
          <circle cx="8" cy="8" r="2" fill="#4e5f96" stroke="#fff" />
        </svg>
        <svg width="16" height="16" viewBox="0 0 16 16">
          <path d="M1 1h13l1 1v13H1Z" fill="#a2a2a2" stroke="#757575" />
          <path d="M4 1h8v5H4ZM3.500 9h9v6h-9Z" fill="#c8c8c8" stroke="#808080" strokeWidth=".8" />
          <path d="M9 2h2v3H9Z" fill="#888" />
        </svg>
        <svg width="16" height="16" viewBox="0 0 16 16">
          <path d="M5.500.500h10v8h-10Z" fill="#fff" stroke="#1c3e78" strokeWidth=".8" />
          <path d="M7 2h7v5H7Z" fill="#1268d6" />
          <path d="M.5 5.500h10v8H.5Z" fill="#fff" stroke="#1c3e78" strokeWidth=".8" />
          <path d="M2 7h7v5H2Z" fill="#1f86ee" />
          <path d="M2 15h7" stroke="#1c3e78" />
        </svg>
        <svg width="16" height="16" viewBox="0 0 16 16">
          <path d="M1 4h6l2-2h6v12H1Z" fill="#1b8ed0" stroke="#12547f" />
          <path d="M1.500 6h13v8h-13Z" fill="#6fd3fb" />
        </svg>
        <svg width="16" height="16" viewBox="0 0 16 16">
          <path d="M0 3.500h16M0 6.500h16M0 9.500h16M0 12.500h16M3.500 0v16M6.500 0v16M9.500 0v16M12.500 0v16" stroke="#42477a" />
          <rect x="1.500" y="1.500" width="13" height="13" fill="#9aa0cf" stroke="#42477a" />
          <path d="m5 4 3 8 3-8" fill="none" stroke="#fff" strokeWidth="1.800" />
        </svg>
      </div>
      <span className="mx-[4px] h-[15px] w-px bg-[#eee]" />
      <svg className="mr-[5px] ml-[1px]" width="16" height="16" viewBox="0 0 16 16">
        <circle cx="7" cy="8" r="6.500" fill="#ccd8e8" stroke="#4a6285" />
        <path d="M3 4q3-3 7-2L7 6 3 8Z" fill="#78b0e5" />
        <path d="M8 3q7 1 5 6l2 1-5 5-2-4 2-.5Q12 6 8 6Z" fill="#5ad32e" stroke="#227a10" />
      </svg>
      <svg className="mr-[4px]" width="16" height="16" viewBox="0 0 16 16">
        <rect x="1" y="1" width="14" height="14" rx="1" fill="#e6e8e1" stroke="#5c5c4e" />
        <path d="M6 3h4v4h3l-5 6-5-6h3Z" fill="#38c42a" stroke="#116a0a" />
      </svg>
      <span className="w-[46px] whitespace-nowrap">Left <span className="font-['DejaVu_Sans',sans-serif]">⌘</span></span>
      <svg className="ml-[7px] self-end" width="14" height="14" viewBox="0 0 14 14">
        <path d="M1 13 13 1M5 13l8-8M9 13l4-4" stroke="#666" />
      </svg>
    </footer>
  );
}

export default function App() {
  return (
    <div className="flex h-[800px] w-[1280px] flex-col overflow-hidden bg-black">
      <MacMenuBar />
      <VmTitleBar />
      <BrowserWindow />
      <div className="mt-px flex flex-col">
        <Taskbar />
        <VmStatusBar />
      </div>
    </div>
  );
}
